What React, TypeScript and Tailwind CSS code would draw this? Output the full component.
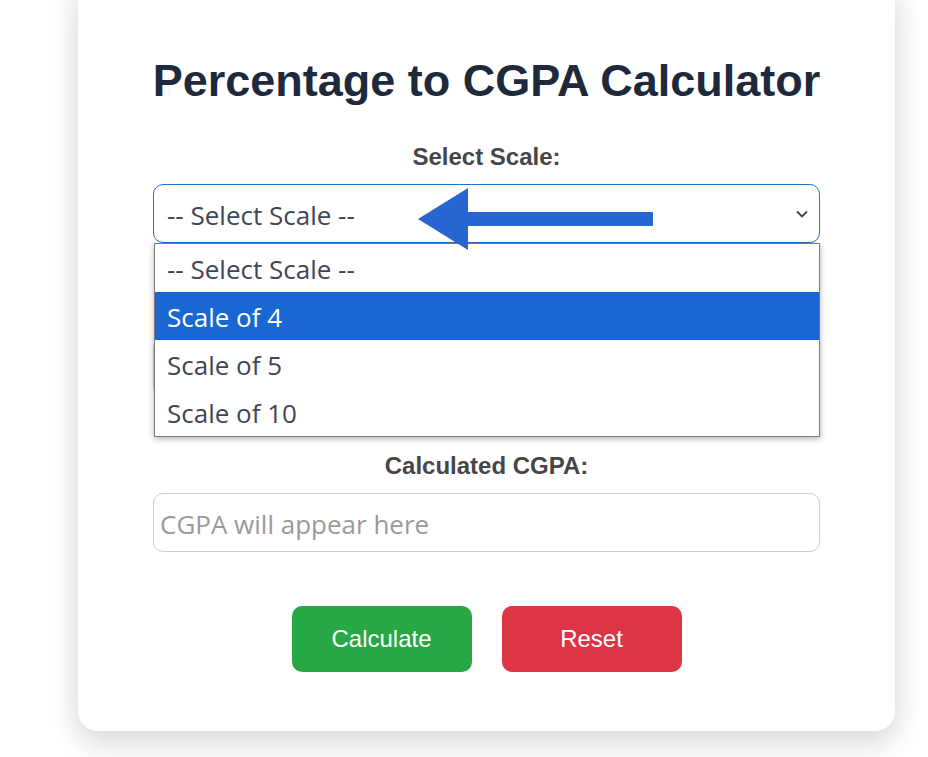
import React from "react"

const fieldFont = { fontFamily: '"Open Sans", "Noto Sans", sans-serif' }

function Arrow() {
  return (
    <svg
      className="pointer-events-none absolute left-[265px] top-[4px] z-20"
      width="236"
      height="63"
      viewBox="0 0 236 63"
    >
      <polygon points="0,31 50,0 50,62" fill="#2766d1" />
      <rect x="49" y="24" width="186" height="14" fill="#2766d1" />
    </svg>
  )
}

function ScaleSelect() {
  const options = ["-- Select Scale --", "Scale of 4", "Scale of 5", "Scale of 10"]
  return (
    <div className="relative">
      <div
        className="flex h-[59px] items-center justify-between rounded-[10px] border border-[#1b75d0] bg-white pl-[13px] pr-[10px] pt-[3px] text-[26px] text-[#3f4756]"
        style={fieldFont}
      >
        <span>-- Select Scale --</span>
        <svg width="12" height="8" viewBox="0 0 12 8" className="mb-[3px] mr-[1px]">
          <polyline points="1,1.5 6,6.5 11,1.5" fill="none" stroke="#444" strokeWidth="1.8" />
        </svg>
      </div>
      <Arrow />
      <ul
        className="absolute left-[1px] right-0 top-[59px] z-10 border border-[#7a7a7a] bg-white shadow-[0_2px_6px_rgba(0,0,0,0.3)]"
        style={fieldFont}
      >
        {options.map((o, i) => (
          <li
            key={o}
            className={
              i === 1
                ? "flex h-[48px] items-center bg-[#1967d2] pl-[12px] pt-[2px] text-[26px] text-white"
                : "flex h-[48px] items-center pl-[12px] pt-[2px] text-[26px] text-[#3f4756]"
            }
          >
            {o}
          </li>
        ))}
      </ul>
    </div>
  )
}

export default function App() {
  return (
    <div className="min-h-[757px] bg-white pb-[26px]" style={{ fontFamily: '"Liberation Sans", Arial, sans-serif' }}>
      <div className="ml-[78px] mt-[-20px] w-[817px] rounded-[20px] bg-white px-[75px] pb-[59px] pt-[76px] shadow-[0_10px_30px_rgba(0,0,0,0.18)]">
        <h1 className="-mx-[20px] whitespace-nowrap text-center text-[45px] font-bold leading-[50px] text-[#1e2a3b]">
          Percentage to CGPA Calculator
        </h1>

        <div className="mt-[38px]">
          <label className="block text-center text-[24px] font-bold leading-[26px] text-[#464646]">
            Select Scale:
          </label>
          <div className="mt-[14px]">
            <ScaleSelect />
          </div>
        </div>

        <div className="mt-[55px]">
          <label className="block text-center text-[24px] font-bold leading-[26px] text-[#464646]">
            Enter Percentage:
          </label>
          <input
            className="mt-[14px] block h-[59px] w-full rounded-[10px] border border-[#cccccc] px-[7px] text-[26px] text-[#3f4756] outline-none placeholder:text-[#9a9a9a]"
            style={fieldFont}
            placeholder="Enter your percentage"
          />
        </div>

        <div className="mt-[56px]">
          <label className="block text-center text-[24px] font-bold leading-[26px] text-[#464646]">
            Calculated CGPA:
          </label>
          <input
            readOnly
            className="mt-[14px] block h-[59px] w-full rounded-[10px] border border-[#cccccc] px-[6px] pt-[2px] text-[26px] text-[#3f4756] outline-none placeholder:text-[#9a9a9a]"
            style={fieldFont}
            placeholder="CGPA will appear here"
          />
        </div>

        <div className="mt-[54px] flex justify-center gap-[30px]">
          <button className="h-[66px] w-[180px] rounded-[10px] bg-[#28a745] text-[24px] text-white">
            Calculate
          </button>
          <button className="h-[66px] w-[180px] rounded-[10px] bg-[#dc3545] text-[24px] text-white">
            Reset
          </button>
        </div>
      </div>
    </div>
  )
}
